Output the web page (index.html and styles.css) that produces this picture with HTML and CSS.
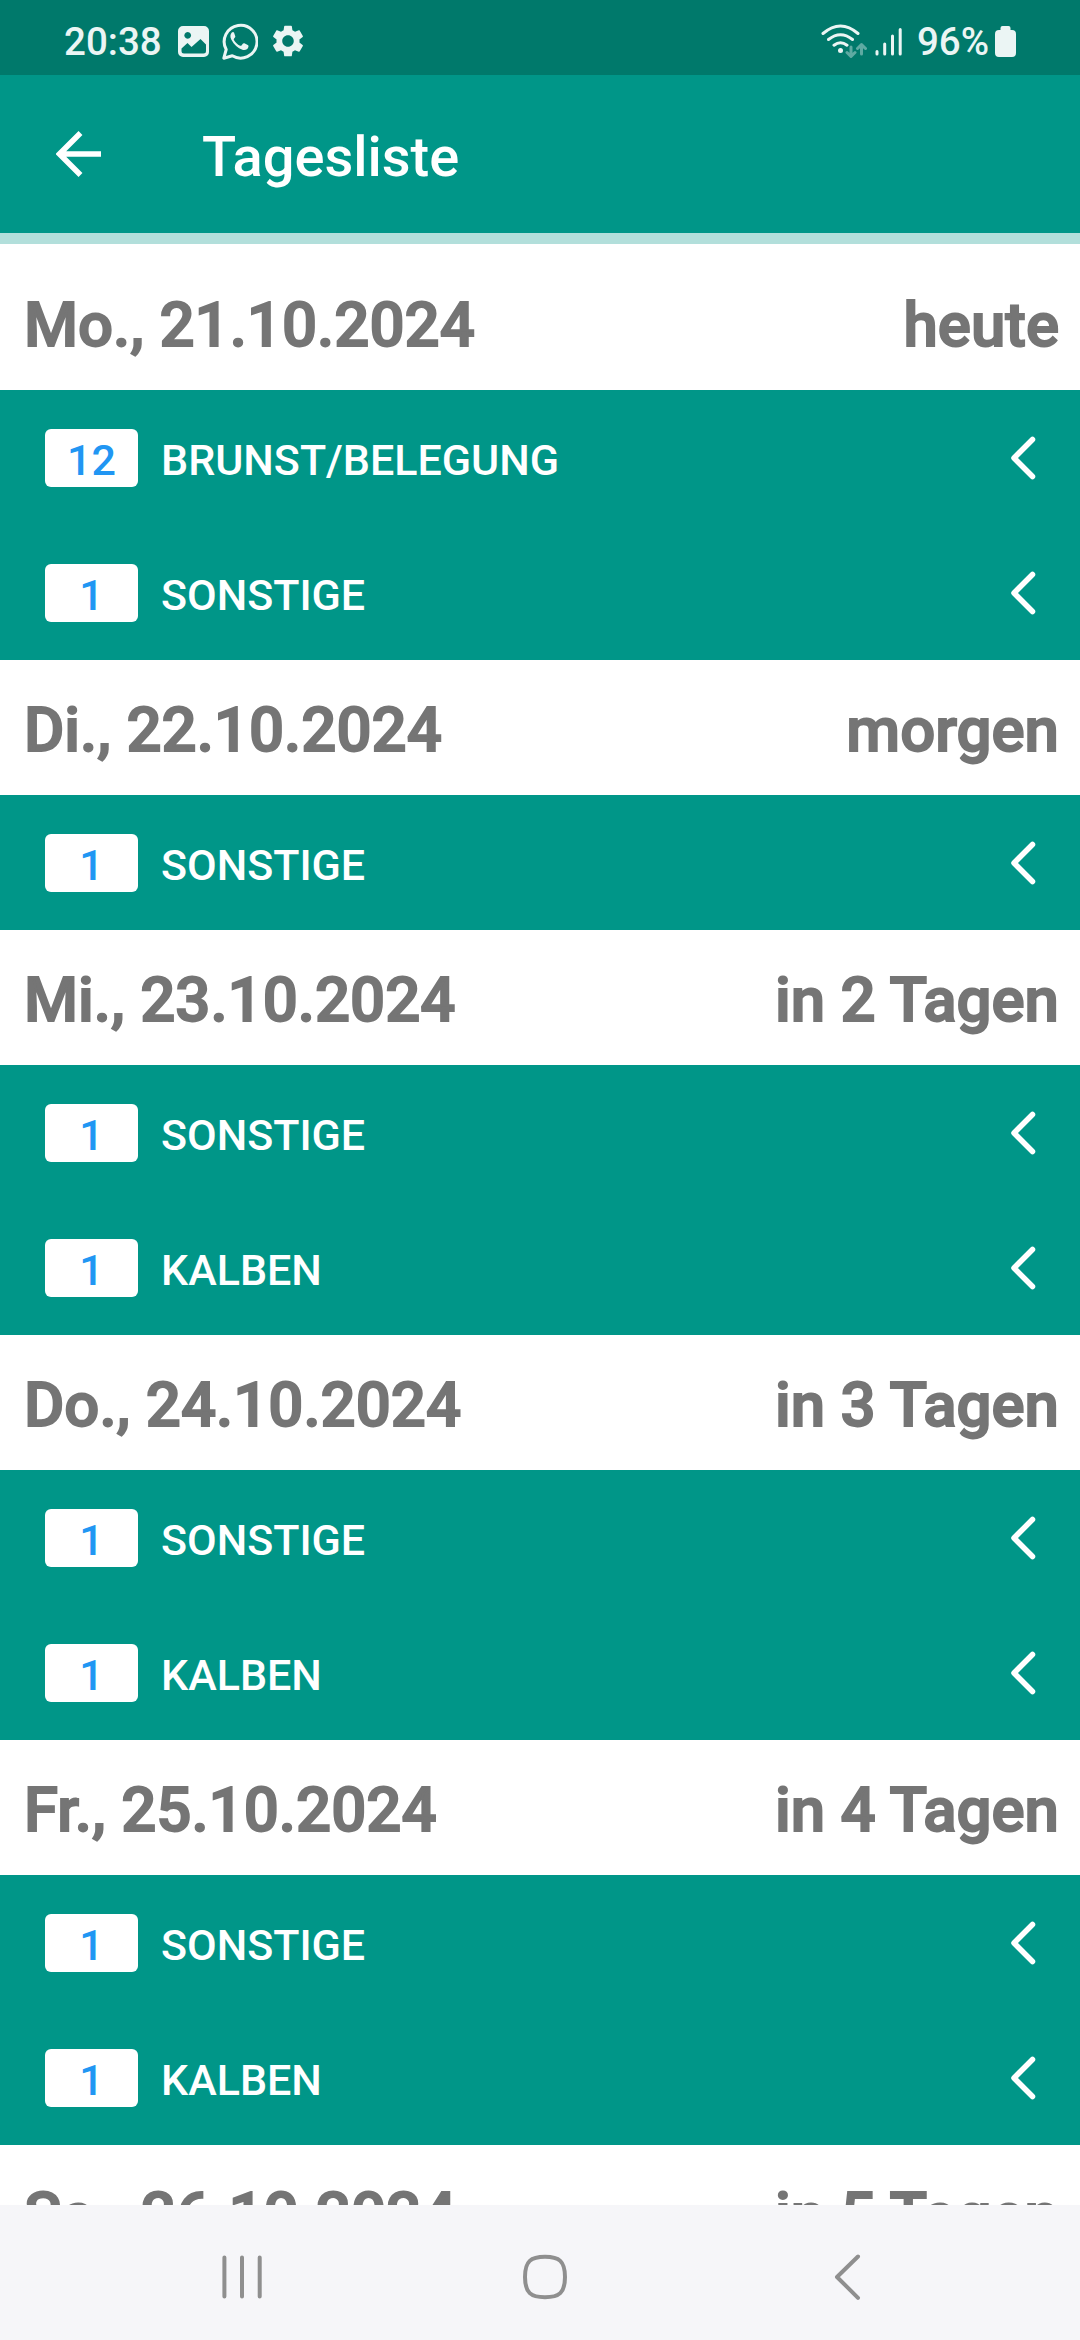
FILE: index.html
```html
<!DOCTYPE html>
<html lang="de">
<head>
    <meta charset="UTF-8">
    <meta name="viewport" content="width=device-width, initial-scale=1.0">
    <title>Tagesliste</title>
    <link rel="stylesheet" href="styles.css">
</head>
<body>
    <div class="status-bar">
        <span class="time">20:38</span>
        <svg class="icon-image" width="31" height="31" viewBox="0 0 31 31">
            <path fill-rule="evenodd" d="M5 0h21a5 5 0 0 1 5 5v21a5 5 0 0 1-5 5H5a5 5 0 0 1-5-5V5a5 5 0 0 1 5-5zM3.5 22.5V25q0 2.500 2.500 2.500H25.500q2.500 0 2.500-2.500V18.500L22.500 13l-9 8-4-4zM9.700 6a3.400 3.400 0 1 0 .01 0z"/>
        </svg>
        <svg class="icon-whatsapp" width="36" height="37" viewBox="0 0 36 37">
            <path class="line" d="M1.800 35.200l2.400-8.700A16.400 16.400 0 1 1 10.300 32.800z"/>
            <path d="M12 9.500c-.5-.8-1.400-.8-2.200 0-1.600 1.700-2 4.300-.4 7.200 2.700 4.900 6.300 8.500 11 10 2.800.9 5.400-.3 6-2.700.3-1.300 0-1.700-.7-2.100l-3.300-1.600c-.7-.3-1.100-.2-1.600.4l-1.300 1.700c-.4.500-.8.500-1.400.3-2.700-1.200-4.800-3.200-6.200-5.700-.3-.6-.2-.9.200-1.400l1-1.300c.3-.5.3-.8.100-1.300z"/>
        </svg>
        <svg class="icon-gear" width="32" height="32" viewBox="2 2 20 20">
            <path d="M19.140 12.940c.04-.3.06-.61.06-.94 0-.32-.02-.64-.07-.94l2.030-1.580c.18-.14.23-.41.120-.61l-1.920-3.320c-.12-.22-.37-.29-.59-.22l-2.390.96c-.5-.38-1.030-.7-1.620-.94l-.36-2.540c-.04-.24-.24-.41-.48-.41h-3.840c-.24 0-.43.17-.47.41l-.36 2.540c-.59.24-1.130.57-1.620.94l-2.390-.96c-.22-.08-.47 0-.59.22L2.740 8.870c-.12.21-.08.47.12.61l2.030 1.580c-.05.3-.09.63-.09.94s.02.64.07.94l-2.030 1.580c-.18.14-.23.41-.12.61l1.920 3.320c.12.22.37.29.59.22l2.390-.96c.5.38 1.030.7 1.620.94l.36 2.540c.05.24.24.41.48.41h3.840c.24 0 .44-.17.47-.41l.36-2.540c.59-.24 1.130-.56 1.620-.94l2.390.96c.22.08.47 0 .59-.22l1.920-3.320c.12-.22.07-.47-.12-.61l-2.010-1.580zM12 15.600c-1.980 0-3.600-1.620-3.600-3.600s1.620-3.600 3.600-3.600 3.600 1.620 3.600 3.600-1.620 3.600-3.600 3.600z"/>
        </svg>

        <div class="status-right">
            <svg width="46" height="36" viewBox="0 0 46 36">
                <path class="line" d="M2 10.500Q19.500-4.500 37 10.500M7.500 16.500q12-9.500 24 0M13 22.200q6.500-5 13 0"/>
                <circle cx="19.500" cy="27.500" r="2.500"/>
                <path class="line dim" d="M30 24v9M26 29.500l4 4 4-4M40.500 31v-9.500M36.500 25.500l4-4 4 4"/>
            </svg>
            <svg class="icon-signal" width="28" height="32" viewBox="0 0 28 32">
                <path class="line" d="M2 26.500v2.500M9.700 19v10M17.500 11v18M25.200 4.500V29"/>
            </svg>
            <span class="percent">96%</span>
            <svg class="icon-battery" width="21" height="31" viewBox="0 0 21 31">
                <path d="M7.500 0h6q2 0 2 2v2H17q4 0 4 4v19q0 4-4 4H4q-4 0-4-4V8q0-4 4-4h1.500V2q0-2 2-2z"/>
            </svg>
        </div>
    </div>

    <div class="app-bar">
        <svg class="back" width="46" height="46" viewBox="0 0 46 46">
            <path d="M45 23H5M24.500 2L3.500 23l21 21"/>
        </svg>
        <h1>Tagesliste</h1>
    </div>
    <div class="progress"></div>

    <div class="list" id="list"></div>

    <div class="nav-bar">
        <svg width="44" height="46" viewBox="0 0 44 46">
            <path d="M4.400 3.500v39M22 3.500v39M39.700 3.500v39"/>
        </svg>
        <svg width="44" height="46" viewBox="0 0 44 46">
            <path d="M22 2.800C36 2.800 42 7 42 23S36 43.200 22 43.200 2 39 2 23 8 2.800 22 2.800z"/>
        </svg>
        <svg width="44" height="46" viewBox="0 0 44 46">
            <path d="M32 2.500L11 23l21 20.800"/>
        </svg>
    </div>

    <script>
    const days = [
        { date: "Mo., 21.10.2024", when: "heute", tasks: [[12, "BRUNST/BELEGUNG"], [1, "SONSTIGE"]] },
        { date: "Di., 22.10.2024", when: "morgen", tasks: [[1, "SONSTIGE"]] },
        { date: "Mi., 23.10.2024", when: "in 2 Tagen", tasks: [[1, "SONSTIGE"], [1, "KALBEN"]] },
        { date: "Do., 24.10.2024", when: "in 3 Tagen", tasks: [[1, "SONSTIGE"], [1, "KALBEN"]] },
        { date: "Fr., 25.10.2024", when: "in 4 Tagen", tasks: [[1, "SONSTIGE"], [1, "KALBEN"]] },
        { date: "Sa., 26.10.2024", when: "in 5 Tagen", tasks: [] }
    ];

    document.getElementById('list').innerHTML = days.map(day => `
        <div class="day">
            <span>${day.date}</span>
            <span>${day.when}</span>
        </div>
        ${day.tasks.map(([count, label]) => `
            <div class="task">
                <span class="count">${count}</span>
                <span class="label">${label}</span>
                <svg class="chevron" width="26" height="44" viewBox="0 0 26 44">
                    <path d="M22.500 3.500L4 22l18.500 18.500"/>
                </svg>
            </div>
        `).join('')}
    `).join('');
    </script>
</body>
</html>
```
FILE: styles.css
```css
* {
    margin: 0;
    padding: 0;
    box-sizing: border-box;
}

body {
    display: flex;
    flex-direction: column;
    height: 100vh;
    overflow: hidden;
    background: #fff;
    font-family: Roboto, sans-serif;
}

svg {
    display: block;
    flex: none;
}

.status-bar {
    display: flex;
    align-items: center;
    flex: none;
    height: 75px;
    padding: 7px 64px 0;
    background: #00796b;
    color: #ebf5f4;
    fill: #ebf5f4;
    font-size: 38.5px;
    font-weight: 500;
}

.status-bar .line {
    fill: none;
    stroke: #ebf5f4;
    stroke-width: 3;
    stroke-linecap: round;
    stroke-linejoin: round;
}

.status-bar .dim {
    opacity: 0.4;
}

.time {
    width: 114px;
}

.icon-whatsapp {
    margin-left: 13px;
}

.icon-gear {
    margin-left: 14px;
}

.status-right {
    display: flex;
    align-items: center;
    margin-left: auto;
}

.icon-signal {
    margin-left: 8px;
}

.percent {
    margin-left: 14px;
}

.icon-battery {
    margin-left: 6px;
}

.app-bar {
    display: flex;
    align-items: center;
    flex: none;
    height: 158px;
    padding-left: 56px;
    background: #009688;
    color: #fff;
}

.back {
    fill: none;
    stroke: #fff;
    stroke-width: 5.5;
}

.app-bar h1 {
    margin-left: 100px;
    padding-top: 5px;
    font-size: 56px;
    font-weight: 500;
}

.progress {
    flex: none;
    height: 11px;
    background: #b2dfdb;
}

.list {
    flex: 1;
    min-height: 0;
    padding-top: 11px;
    overflow: hidden;
}

.day {
    display: flex;
    align-items: center;
    justify-content: space-between;
    height: 135px;
    padding: 5px 21px 0 24px;
    color: #757575;
    font-size: 61.8px;
    font-weight: 500;
    -webkit-text-stroke: 1.8px #757575;
}

.task {
    display: flex;
    align-items: center;
    height: 135px;
    padding: 0 44px 0 45px;
    background: #009688;
    color: #fff;
    font-size: 43px;
    font-weight: 500;
}

.count {
    width: 93px;
    height: 58px;
    padding-top: 2px;
    border-radius: 6px;
    background: #fff;
    color: #2196f3;
    line-height: 58px;
    text-align: center;
}

.label {
    margin-left: 23px;
    padding-top: 4px;
}

.chevron {
    margin-left: auto;
    fill: none;
    stroke: #fff;
    stroke-width: 5.5;
    stroke-linecap: round;
    stroke-linejoin: round;
}

.nav-bar {
    display: flex;
    align-items: center;
    justify-content: space-between;
    flex: none;
    height: 135px;
    padding: 9px 210px 0 220px;
    background: #f6f6f9;
    fill: none;
    stroke: #8f8f8f;
    stroke-width: 4;
    stroke-linecap: round;
    stroke-linejoin: round;
}
```
